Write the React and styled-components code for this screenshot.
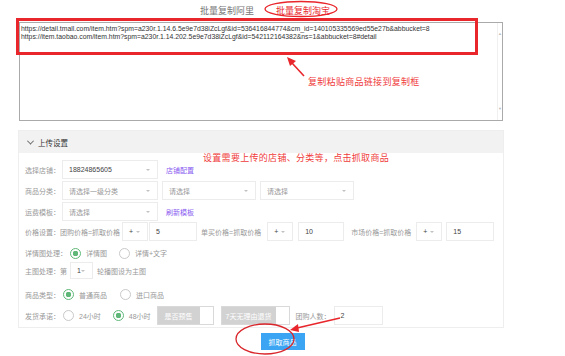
import React from "react";
import styled, { createGlobalStyle } from "styled-components";

const GlobalStyle = createGlobalStyle`
  body {
    margin: 0;
    background: #fff;
    font-family: "Liberation Sans", "Noto Sans CJK SC", sans-serif;
  }
`;

const Page = styled.div`
  position: relative;
  width: 565px;
  height: 356px;
  overflow: hidden;
  padding-left: 18px;
  box-sizing: border-box;
`;

const Tabs = styled.div`
  display: flex;
  align-items: center;
  gap: 22px;
  height: 16px;
  padding: 2px 0 0 182px;
  font-size: 9px;
`;

const Tab = styled.span`
  color: ${(p) => (p.$active ? "#e8262b" : "#777")};
`;

const PasteWrap = styled.div`
  position: relative;
  margin-top: 4px;
  margin-left: 1px;
  width: 484px;
  height: 99px;
  border: 1px solid #aaa;
  box-sizing: border-box;
  display: flex;
`;

const PasteText = styled.div`
  flex: 1;
  padding: 2px 0 0 1px;
  font-size: 6.85px;
  line-height: 8px;
  color: #333;
  white-space: nowrap;
`;

const ScrollBar = styled.div`
  width: 4px;
  border-left: 1px solid #f0f0f0;
  display: flex;
  flex-direction: column;
  justify-content: space-between;
  align-items: center;
  padding: 8px 0 9px;
  font-size: 4px;
  color: #bbb;
`;

const RedBox = styled.div`
  position: absolute;
  left: -4px;
  top: -5px;
  width: 462px;
  height: 37px;
  border: 3px solid #e8262b;
  box-sizing: border-box;
`;

const Note = styled.div`
  position: absolute;
  left: ${(p) => p.$x}px;
  top: ${(p) => p.$y}px;
  font-size: 9px;
  letter-spacing: 0.3px;
  color: #ef3b3b;
  white-space: nowrap;
`;

const Panel = styled.div`
  margin-top: 9px;
  width: 486px;
  border: 1px solid #eee;
  box-sizing: border-box;
`;

const PanelHead = styled.div`
  display: flex;
  align-items: center;
  gap: 5px;
  height: 22px;
  padding-left: 9px;
  background: #f2f2f2;
  font-size: 7.5px;
  color: #333;
`;

const Chevron = styled.span`
  width: 4px;
  height: 4px;
  border-right: 1px solid #666;
  border-bottom: 1px solid #666;
  transform: rotate(45deg) translate(-1px, -1px);
`;

const PanelBody = styled.div`
  position: relative;
  padding: 7px 0 2px 6px;
`;

const Row = styled.div`
  display: flex;
  align-items: center;
  height: ${(p) => p.$h || 19}px;
  margin-bottom: ${(p) => p.$mb || 0}px;
  font-size: 7px;
  color: #999;
  white-space: nowrap;
`;

const Label = styled.span`
  width: ${(p) => (p.$w ? `${p.$w}px` : "auto")};
  margin-right: ${(p) => p.$mr || 0}px;
  color: #999;
`;

const Select = styled.div`
  position: relative;
  display: flex;
  align-items: center;
  width: ${(p) => p.$w}px;
  height: ${(p) => p.$h || 19}px;
  margin-right: ${(p) => p.$mr || 0}px;
  padding-left: 6px;
  border: 1px solid #ececec;
  box-sizing: border-box;
  color: ${(p) => (p.$dark ? "#444" : "#999")};
  font-size: 7px;
  &::after {
    content: "";
    position: absolute;
    right: 7px;
    top: 50%;
    margin-top: -1px;
    border: 2.5px solid transparent;
    border-top-color: #c2c2c2;
  }
`;

const Input = styled.div`
  display: flex;
  align-items: center;
  width: ${(p) => p.$w}px;
  height: 19px;
  margin-right: ${(p) => p.$mr || 0}px;
  padding-left: 6px;
  border: 1px solid #ececec;
  box-sizing: border-box;
  color: #444;
  font-size: 7px;
`;

const Link = styled.span`
  margin-left: 8px;
  color: #8a5cf0;
  font-size: 7px;
`;

const Radio = styled.span`
  display: flex;
  align-items: center;
  gap: 5px;
  margin-right: ${(p) => p.$mr || 0}px;
  color: #999;
  &::before {
    content: "";
    width: 9px;
    height: 9px;
    border-radius: 50%;
    border: 1px solid ${(p) => (p.$on ? "#5fb878" : "#c9c9c9")};
    background: ${(p) =>
      p.$on ? "radial-gradient(circle, #5fb878 0 2.6px, #fff 3px)" : "#fff"};
  }
`;

const Check = styled.span`
  display: flex;
  height: 19px;
  margin-right: ${(p) => p.$mr || 0}px;
  border: 1px solid #d9d9d9;
  box-sizing: border-box;
  span {
    display: flex;
    align-items: center;
    padding: 0 ${(p) => p.$pad || 7}px;
    background: #d2d2d2;
    color: #fff;
  }
  i {
    width: 13px;
    background: #fff;
  }
`;

const Footer = styled.div`
  display: flex;
  justify-content: center;
  padding: 5px 18px 0 0;
`;

const Button = styled.button`
  width: 44px;
  height: 17px;
  border: none;
  padding: 0;
  background: #3ba5f3;
  color: #fff;
  font-family: inherit;
  font-size: 7px;
`;

const Marks = styled.svg`
  position: absolute;
  left: 0;
  top: 0;
  pointer-events: none;
`;

export default function App() {
  return (
    <>
      <GlobalStyle />
      <Page>
        <Tabs>
          <Tab>批量复制阿里</Tab>
          <Tab $active>批量复制淘宝</Tab>
        </Tabs>

        <PasteWrap>
          <PasteText>
            https://detail.tmall.com/item.htm?spm=a230r.1.14.6.5e9e7d38iZcLgf&amp;id=536416844774&amp;cm_id=140105335569ed55e27b&amp;abbucket=8
            <br />
            https://item.taobao.com/item.htm?spm=a230r.1.14.202.5e9e7d38iZcLgf&amp;id=542112164382&amp;ns=1&amp;abbucket=8#detail
          </PasteText>
          <ScrollBar>
            <span>▲</span>
            <span>▼</span>
          </ScrollBar>
          <RedBox />
          <Note $x={288} $y={52}>复制粘贴商品链接到复制框</Note>
        </PasteWrap>

        <Panel>
          <PanelHead>
            <Chevron />
            上传设置
          </PanelHead>
          <PanelBody>
            <Note $x={184} $y={-2}>设置需要上传的店铺、分类等，点击抓取商品</Note>
            <Row $mb={2}>
              <Label $w={37}>选择店铺：</Label>
              <Select $w={96} $dark>18824865605</Select>
              <Link>店铺配置</Link>
            </Row>
            <Row $mb={2}>
              <Label $w={37}>商品分类：</Label>
              <Select $w={96} $mr={4}>请选择一级分类</Select>
              <Select $w={94} $mr={4}>请选择</Select>
              <Select $w={94}>请选择</Select>
            </Row>
            <Row $mb={1}>
              <Label $w={37}>运费模板：</Label>
              <Select $w={96}>请选择</Select>
              <Link>刷新模板</Link>
            </Row>
            <Row $mb={3}>
              <Label $mr={2}>价格设置：团购价格=抓取价格</Label>
              <Select $w={26} $mr={1} $dark>+</Select>
              <Input $w={48} $mr={4}>5</Input>
              <Label $mr={6}>单买价格=抓取价格</Label>
              <Select $w={26} $mr={5} $dark>+</Select>
              <Input $w={46} $mr={7}>10</Input>
              <Label $mr={5}>市场价格=抓取价格</Label>
              <Select $w={26} $mr={4} $dark>+</Select>
              <Input $w={48}>15</Input>
            </Row>
            <Row $h={18}>
              <Label $w={45}>详情图处理：</Label>
              <Radio $on $mr={12}>详情图</Radio>
              <Radio>详情+文字</Radio>
            </Row>
            <Row $h={17} $mb={6}>
              <Label $w={45}>主图处理：第</Label>
              <Select $w={23} $h={17} $mr={4} $dark>1</Select>
              <Label>轮播图设为主图</Label>
            </Row>
            <Row $mb={2}>
              <Label $w={38}>商品类型：</Label>
              <Radio $on $mr={13}>普通商品</Radio>
              <Radio>进口商品</Radio>
            </Row>
            <Row>
              <Label $w={38}>发货承诺：</Label>
              <Radio $mr={12}>24小时</Radio>
              <Radio $on $mr={6}>48小时</Radio>
              <Check $mr={7}>
                <span>是否预售</span>
                <i />
              </Check>
              <Check $mr={6} $pad={4}>
                <span>7天无理由退货</span>
                <i />
              </Check>
              <Label $mr={3}>团购人数：</Label>
              <Input $w={49}>2</Input>
            </Row>
          </PanelBody>
        </Panel>

        <Footer>
          <Button>抓取商品</Button>
        </Footer>

        <Marks width="565" height="356" viewBox="0 0 565 356">
          <ellipse cx="301" cy="9" rx="36" ry="7.5" fill="none" stroke="#e8262b" strokeWidth="1.3" />
          <ellipse cx="265" cy="339" rx="29" ry="15" fill="none" stroke="#d9262b" strokeWidth="1.3" />
          <line x1="304" y1="76" x2="292" y2="63" stroke="#e8262b" strokeWidth="1.6" />
          <polygon points="287,57 296,61 290,66" fill="#e8262b" />
          <line x1="340" y1="318" x2="297" y2="328" stroke="#e8262b" strokeWidth="1.6" />
          <polygon points="290,330 298,324 299,332" fill="#e8262b" />
        </Marks>
      </Page>
    </>
  );
}
